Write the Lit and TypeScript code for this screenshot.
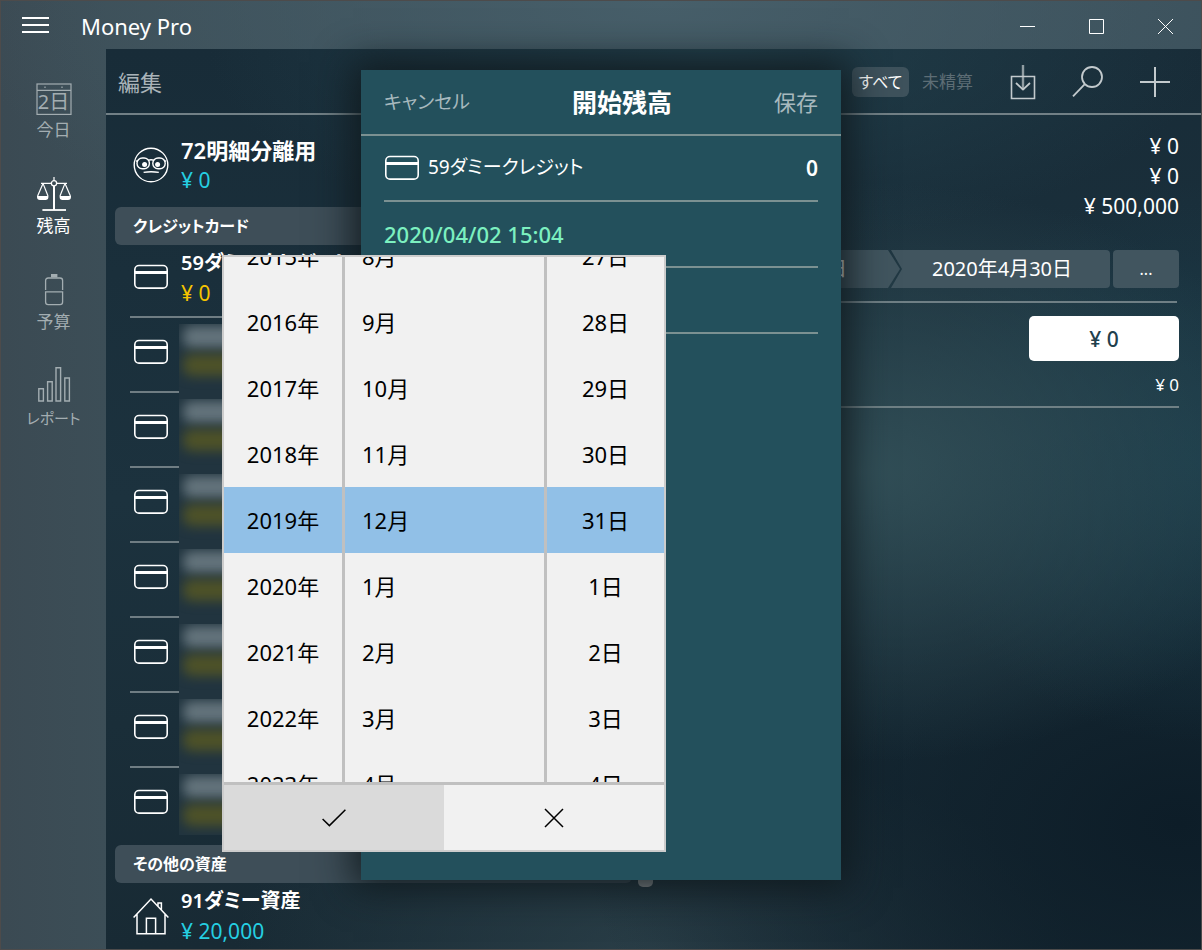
import { LitElement, html, css, svg } from "lit";
import { customElement, state } from "lit/decorators.js";

const cardIcon = html`<svg class="card" width="36" height="26" viewBox="0 0 36 26" fill="none" stroke="#fff" aria-hidden="true">
  <rect x="1.8" y="1.5" width="32.4" height="22.6" rx="4.2" stroke-width="1.6"/>
  <path d="M1.8 8.5H34.2" stroke-width="3.2"/>
</svg>`;

const faceIcon = html`<svg width="36" height="36" viewBox="0 0 36 36" fill="none" stroke="#fff" stroke-width="1.4" aria-hidden="true">
  <circle cx="18" cy="18" r="16.8"/>
  <rect x="4" y="11" width="12.4" height="10.8" rx="5.3"/>
  <rect x="19.8" y="11" width="12.4" height="10.8" rx="5.3"/>
  <path d="M15 13.4Q18 12 21.2 13.4M3 14.4L5 13.4M31 13.4L33 14.4M10.6 25.4Q18 24 25.8 25.4"/>
  <circle cx="11.6" cy="17.4" r="2.5" fill="#fff" stroke="none"/>
  <circle cx="24.6" cy="17.4" r="2.5" fill="#fff" stroke="none"/>
</svg>`;

const houseIcon = html`<svg width="36" height="38" viewBox="0 0 36 38" fill="none" stroke="#fff" stroke-width="1.5" aria-hidden="true">
  <path d="M.6 20.4L18 2L35.4 20.4M4 17V36.8H32V17M13.4 36.8V21.2H22.6V36.8M25 9.4V6H28.4V13"/>
</svg>`;

const navIcons = [
  html`<svg width="36" height="36" viewBox="0 0 36 36" fill="none" stroke="currentColor" stroke-width="1.2" aria-hidden="true">
    <rect x="1" y="2" width="34" height="30.4"/><path d="M1 8.3H35M9 4.6V6M26 4.6V6"/></svg>`,
  html`<svg width="36" height="36" viewBox="0 1 36 36" fill="none" stroke="currentColor" stroke-width="1.2" aria-hidden="true">
    <path d="M18 0V3.6M5 6.4H14.6L15.4 5.8M31 6.4H21.4L20.6 5.8M7 6.4L1.6 19M7 6.4L12 19M29 6.4L34.4 19M29 6.4L24 19"/>
    <circle cx="18" cy="6.2" r="2.6"/><path d="M18 9V33" stroke-width="2"/><path d="M6.4 33H30" stroke-width="1.8"/>
    <path d="M1 19H12.4V20Q12.4 23 9.4 23H4Q1 23 1 20ZM23.6 19H35V20Q35 23 32 23H26.6Q23.6 23 23.6 20Z" fill="currentColor" stroke="none"/></svg>`,
  html`<svg width="36" height="36" viewBox="0 1 36 36" fill="none" stroke="currentColor" stroke-width="1.3" aria-hidden="true">
    <path d="M15 1H21.4V4.4H15Z" fill="currentColor" stroke="none"/>
    <path d="M9.6 17V7.6Q9.6 5 12.2 5H24Q26.6 5 26.6 7.6V17M9.6 18.8H26.6V29Q26.6 31.6 24 31.6H12.2Q9.6 31.6 9.6 29Z"/></svg>`,
  html`<svg width="36" height="36" viewBox="0 4 36 36" fill="none" stroke="currentColor" stroke-width="1.4" aria-hidden="true">
    <path d="M2.8 22.8H7.4V35H2.8ZM11.6 15.8H16.2V35H11.6ZM20 1.8H24.6V35H20ZM28.8 12H33.4V35H28.8Z"/></svg>`,
];

const line = (d: string, size: number) => svg`<path d=${d} stroke-width=${size}/>`;

@customElement("app-root")
export class AppRoot extends LitElement {
  @state() private filter = "all";

  private nav = ["今日", "残高", "予算", "レポート"];
  private years = [2015, 2016, 2017, 2018, 2019, 2020, 2021, 2022, 2023].map((n) => `${n}年`);
  private months = [8, 9, 10, 11, 12, 1, 2, 3, 4].map((n) => `${n}月`);
  private days = [27, 28, 29, 30, 31, 1, 2, 3, 4].map((n) => `${n}日`);

  static styles = css`
    :host {
      display: block;
      height: 100vh;
      overflow: hidden;
      color: #fff;
      font: 21px/30px "Noto Sans", "Noto Sans CJK JP", sans-serif;
      font-feature-settings: "palt";
    }
    * { box-sizing: border-box; }
    button, input {
      font: inherit;
      font-feature-settings: inherit;
      color: inherit;
      background: none;
      border: 0;
      padding: 0;
      margin: 0;
    }
    svg { display: block; flex: none; overflow: visible; }
    h1, h2, h3, p, ul { margin: 0; padding: 0; font: inherit; list-style: none; }

    .window {
      position: relative;
      height: 100%;
      display: grid;
      grid-template: 48px 1fr / 105px 1fr;
      border: 1px solid #4d4b4b;
      background:
        radial-gradient(700px 300px at 55% 0, #475f6a, transparent),
        linear-gradient(90deg, #3b4a53, #3c4e57 106px, #3a4f5a);
    }
    .titlebar { grid-column: 1 / -1; display: flex; align-items: center; padding: 2px 1px 0 0; }
    .menu { width: 69px; padding-left: 21px; height: 46px; }
    .title { flex: 1; padding-left: 11px; font-size: 22px; }
    .caption { width: 69px; height: 46px; display: grid; place-items: center; }

    .rail { padding-top: 33px; display: flex; flex-direction: column; gap: 36px; }
    .nav {
      display: flex; flex-direction: column; align-items: center;
      height: 60px; color: #a3adb1; font-size: 17px; line-height: 24px;
    }
    .nav.kana { font-size: 15px; }
    .nav.on { color: #fff; }
    .glyph { display: grid; }
    .glyph > * { grid-area: 1 / 1; }
    .datenum { font-size: 20px; line-height: 24px; padding-top: 8px; text-align: center; }

    .main {
      isolation: isolate;
      display: grid;
      grid-template: 66px 1fr / 550px 1fr;
      min-height: 0;
      background:
        radial-gradient(460px 290px at 69% 47%, #34525ae6, #34525a00),
        radial-gradient(300px 280px at 100% 46%, #1b3f4dcc, #1b3f4d00),
        radial-gradient(500px 200px at 55% 0, #24434fcc, #24434f00),
        radial-gradient(600px 400px at 98% 86%, #0d1d28, #0d1d2800),
        radial-gradient(420px 200px at 50% 100%, #2e434ccc, #2e434c00),
        linear-gradient(180deg, #182c38, #1c323e 50%, #182a34);
    }
    .toolbar {
      grid-column: 1 / -1; display: flex; align-items: center;
      padding: 2px 31px 0 12px; border-bottom: 2px solid #728086;
    }
    .edit { font-size: 22px; color: #a9b3b8; }
    .spacer { flex: 1; }
    .filter { height: 30px; line-height: 30px; font-size: 17px; border-radius: 6px; color: #5d6d75; width: 77px; }
    .filter.on { width: 57px; font-size: 16px; color: #fff; background: #3e525c; }
    .tools { display: flex; align-items: center; gap: 34px; padding-left: 24px; color: #c3cacd; }

    .list { padding: 20px 24px 0 9px; min-height: 0; overflow: hidden; }
    .account { display: flex; gap: 12px; padding-left: 18px; height: 72px; line-height: 30px; }
    .account .icon { width: 36px; display: grid; place-items: center; height: 60px; }
    .account:last-child { padding-top: 3px; }
    .name { font-weight: 600; font-size: 22px; }
    .name.kana { font-size: 20px; }
    .cyan { color: #25cfe2; }
    .gold { color: #f5c400; }
    .group {
      height: 38px; line-height: 38px; padding-left: 18px; border-radius: 6px;
      background: #3e4e58; font-size: 16px; font-weight: 600;
    }
    .rows { margin: -2px 0 2px 15px; }
    .card-row {
      display: flex; gap: 12px; height: 75px; padding-left: 3px;
      border-bottom: 2px solid #6f7d83;
    }
    .card-row:last-child { border: 0; }
    .card-row .icon { width: 36px; display: grid; place-items: center; height: 68px; }
    .card-text { padding-top: 5px; }
    .mask {
      flex: 1; margin: 6px 0 -8px -2px; padding: 2px 0 0 4px; background: #21343f; overflow: hidden;
      display: flex; flex-direction: column; gap: 6px; z-index: 1;
    }
    .card-row:last-child .mask { margin-bottom: 8px; }
    .mask i { display: block; width: 200px; height: 22px; border-radius: 8px; background: #64747c; filter: blur(6px); }
    .mask i + i { background: #4e5228; }

    .detail { padding: 16px 22px 0 0; text-align: right; }
    .steps { display: flex; justify-content: flex-end; gap: 3px; margin-top: 29px; height: 38px; font-size: 20px; }
    .step { background: #41555f; width: 219px; }
    .step.past { width: 234px; padding-right: 53px; text-align: right; clip-path: polygon(0 0, 222px 0, 100% 50%, 222px 100%, 0 100%); }
    .step.now { margin-left: -12px; padding-left: 3px; border-radius: 0 4px 4px 0; clip-path: polygon(0 0, 100% 0, 100% 100%, 0 100%, 11px 50%); }
    .step.more { width: 66px; border-radius: 4px; font-size: 16px; }
    .rule { height: 2px; background: #6f7f85; margin: 13px 2px 0 0; }
    .balance {
      display: block; width: 150px; height: 45px; margin: 13px 0 9px auto;
      background: #fff; color: #22404d; border-radius: 5px; text-align: center; font-weight: 500;
    }
    .sub { font-size: 17px; height: 38px; line-height: 30px; border-bottom: 2px solid #6f8085; }

    .dialog {
      position: absolute; top: 69px; bottom: 69px; left: 50%; z-index: 2;
      width: 480px; margin-left: -240px; background: #23505c;
      box-shadow: 0 0 36px 8px #10191ef0;
    }
    .dialog-head {
      display: flex; justify-content: space-between; align-items: center;
      height: 66px; padding: 0 23px; border-bottom: 2px solid #7b9192; color: #a7b9be;
    }
    .dialog-head h2 { font-size: 25px; font-weight: 700; color: #fff; }
    .cancel { font-size: 19px; }
    .save { font-size: 22px; }
    .fields { padding: 0 23px; }
    .field { display: flex; align-items: center; height: 66px; border-bottom: 2px solid #7b9192; }
    .field label { flex: 1; padding: 0 0 2px 8px; font-size: 19px; }
    .amount { width: 100px; text-align: right; font-weight: 600; }
    .when { color: #7cf0c0; font-size: 22px; font-weight: 500; }

    .picker {
      position: absolute; top: 185px; left: -139px; width: 444px;
      border: 2px solid #ccc; background: #f1f1f1; color: #000;
    }
    .wheels { display: grid; grid-template-columns: 118px 1fr 117px; gap: 3px; height: 528px; background: #c0c0c0; border-bottom: 3px solid #c0c0c0; }
    .wheel { display: flex; flex-direction: column; justify-content: center; overflow: hidden; background: #f1f1f1; text-align: center; }
    .wheel.months { text-align: left; }
    .wheel.months li { padding-left: 17px; }
    .wheel li { flex: none; height: 66px; line-height: 66px; font-size: 22px; }
    .wheel li.sel { background: #91c0e7; }
    .confirm { display: grid; grid-template-columns: 1fr 1fr; height: 65px; }
    .confirm button { display: grid; place-items: center; }
    .confirm .ok { background: #dadada; }
    .thumb { position: absolute; left: 637px; top: 840px; width: 15px; height: 46px; border-radius: 5px; background: #909496; }
  `;

  private wheel(label: string, items: string[], cls: string) {
    return html`<ul class="wheel ${cls}" role="listbox" aria-label=${label}>
      ${items.map((t, i) => html`<li role="option" class=${i === 4 ? "sel" : ""} aria-selected=${i === 4}>${t}</li>`)}
    </ul>`;
  }

  render() {
    return html`<div class="window">
      <header class="titlebar">
        <button class="menu" aria-label="メニュー"><svg width="27" height="18" viewBox="0 0 27 18" stroke="#fff" fill="none">${line("M0 1H27M0 8H27M0 15H27", 2)}</svg></button>
        <h1 class="title">Money Pro</h1>
        <button class="caption" aria-label="最小化"><svg width="15" height="15" stroke="#fff" fill="none">${line("M0 7.5H15", 1)}</svg></button>
        <button class="caption" aria-label="最大化"><svg width="15" height="15" stroke="#fff" fill="none">${line("M.5 .5H14.5V14.5H.5Z", 1)}</svg></button>
        <button class="caption" aria-label="閉じる"><svg width="15" height="15" stroke="#fff" fill="none">${line("M0 0L15 15M15 0L0 15", 1)}</svg></button>
      </header>

      <nav class="rail">
        ${this.nav.map((t, i) => html`<button class="nav ${i === 1 ? "on" : ""} ${i === 3 ? "kana" : ""}">
          <span class="glyph">${navIcons[i]}${i === 0 ? html`<span class="datenum">2日</span>` : ""}</span>
          <span>${t}</span>
        </button>`)}
      </nav>

      <main class="main">
        <div class="toolbar">
          <button class="edit">編集</button>
          <span class="spacer"></span>
          <button class="filter ${this.filter === "all" ? "on" : ""}" @click=${() => (this.filter = "all")}>すべて</button>
          <button class="filter ${this.filter === "open" ? "on" : ""}" @click=${() => (this.filter = "open")}>未精算</button>
          <div class="tools">
            <button aria-label="取り込み"><svg width="26" height="36" viewBox="0 0 26 36" fill="none" stroke="currentColor">
              <path d="M1.5 12.5H24.5V34.5H1.5Z" stroke-width="1.6"/><path d="M13 1V26" stroke-width="2.4" opacity=".7"/><path d="M6 19L13 25.6L20 19" stroke-width="1.8"/></svg></button>
            <button aria-label="検索"><svg width="36" height="36" viewBox="0 0 36 36" fill="none" stroke="currentColor" stroke-width="1.8">
              <circle cx="22" cy="13" r="10"/><path d="M14.8 20.2L3 32.4"/></svg></button>
            <button aria-label="追加"><svg width="30" height="30" viewBox="0 0 30 30" fill="none" stroke="currentColor">${line("M15 0V30M0 15H30", 2)}</svg></button>
          </div>
        </div>

        <section class="list">
          <div class="account"><span class="icon">${faceIcon}</span><div><p class="name">72明細分離用</p><p class="cyan">¥ 0</p></div></div>
          <h3 class="group">クレジットカード</h3>
          <div class="rows">
            <div class="card-row"><span class="icon">${cardIcon}</span><div class="card-text"><p class="name kana">59ダミークレジット</p><p class="gold">¥ 0</p></div></div>
            ${[1, 2, 3, 4, 5, 6, 7].map(() => html`<div class="card-row"><span class="icon">${cardIcon}</span><div class="mask" aria-hidden="true"><i></i><i></i></div></div>`)}
          </div>
          <h3 class="group">その他の資産</h3>
          <div class="account"><span class="icon">${houseIcon}</span><div><p class="name kana">91ダミー資産</p><p class="cyan">¥ 20,000</p></div></div>
        </section>

        <section class="detail">
          <p>¥ 0</p><p>¥ 0</p><p>¥ 500,000</p>
          <div class="steps">
            <button class="step past">2020年3月31日</button>
            <button class="step now">2020年4月30日</button>
            <button class="step more">...</button>
          </div>
          <div class="rule"></div>
          <button class="balance">¥ 0</button>
          <p class="sub">¥ 0</p>
        </section>
      </main>

      <span class="thumb"></span>
      <div class="dialog" role="dialog" aria-labelledby="dlg">
        <div class="dialog-head">
          <button class="cancel">キャンセル</button>
          <h2 id="dlg">開始残高</h2>
          <button class="save">保存</button>
        </div>
        <div class="fields">
          <div class="field">${cardIcon}<label for="amount">59ダミークレジット</label><input id="amount" class="amount" value="0" /></div>
          <div class="field"><button class="when">2020/04/02 15:04</button></div>
          <div class="field"></div>
        </div>
        <div class="picker">
          <div class="wheels">
            ${this.wheel("年", this.years, "years")}
            ${this.wheel("月", this.months, "months")}
            ${this.wheel("日", this.days, "days")}
          </div>
          <div class="confirm">
            <button class="ok" aria-label="決定"><svg width="24" height="18" viewBox="0 0 24 18" fill="none" stroke="#000">${line("M.6 10L7.4 16.6L23.4 .8", 1.5)}</svg></button>
            <button aria-label="取り消し"><svg width="18" height="18" viewBox="0 0 18 18" fill="none" stroke="#000">${line("M0 0L18 18M18 0L0 18", 1.5)}</svg></button>
          </div>
        </div>
      </div>
    </div>`;
  }
}
